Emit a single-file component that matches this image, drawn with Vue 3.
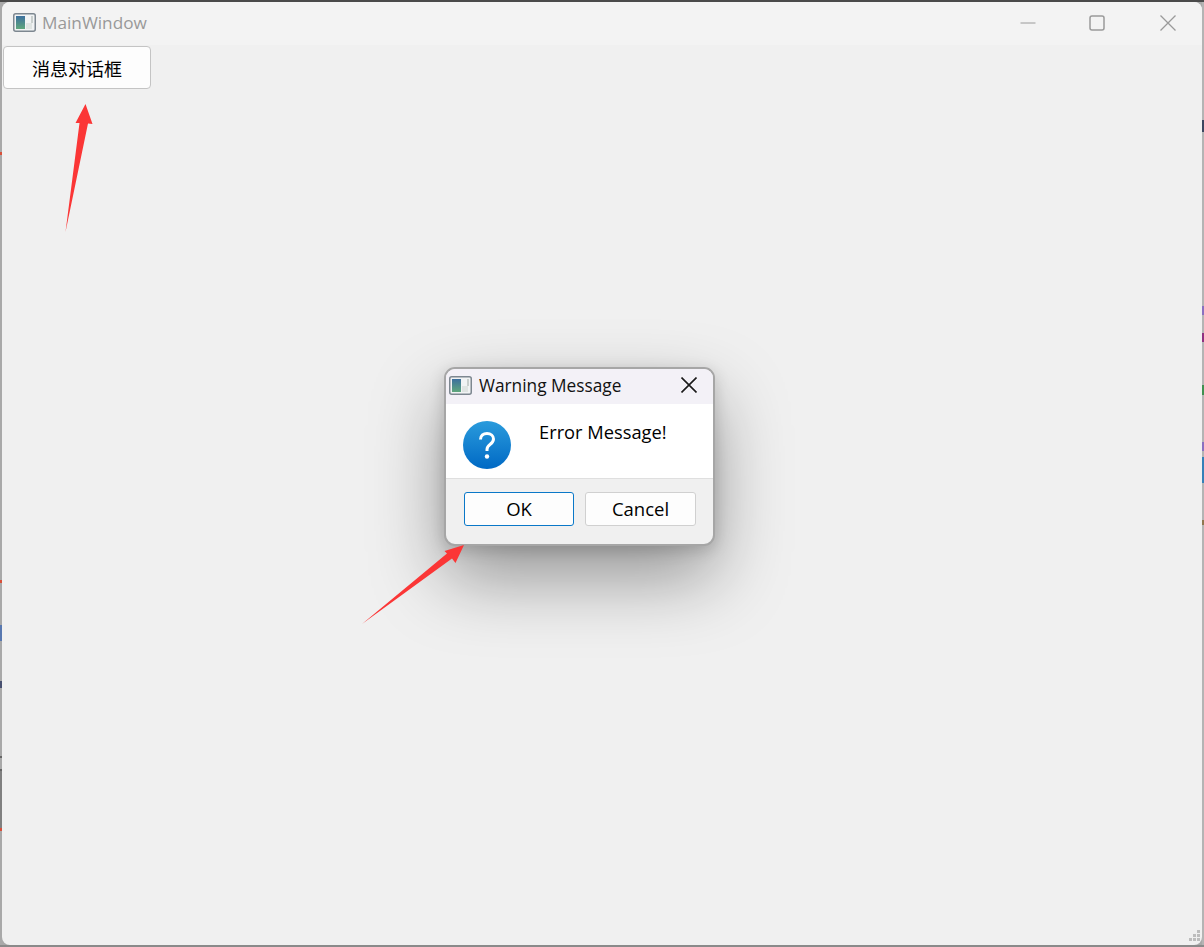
<template>
  <div class="window">
    <header class="titlebar">
      <svg class="app-icon" width="23" height="19" viewBox="0 0 23 19">
        <defs>
          <linearGradient id="pane" x1="0" y1="0" x2="0" y2="1">
            <stop offset="0" stop-color="#3c6f9e" />
            <stop offset="1" stop-color="#5fa77c" />
          </linearGradient>
        </defs>
        <rect x="0.75" y="0.75" width="21.5" height="17.5" rx="2" fill="#f1f3f4" stroke="#7d8790" stroke-width="1.5" />
        <rect x="3" y="3" width="9" height="13" fill="url(#pane)" />
        <rect x="13" y="10" width="6" height="6" fill="#dfe4e2" />
        <rect x="18" y="3" width="2" height="7" fill="#c9cfcd" />
      </svg>
      <span class="title">MainWindow</span>
      <div class="controls">
        <svg width="16" height="16" viewBox="0 0 16 16"><path d="M0.5 8H15.5" stroke="#9a9a9a" stroke-width="1" fill="none" /></svg>
        <svg width="16" height="16" viewBox="0 0 16 16"><rect x="1" y="1" width="14" height="14" rx="2" stroke="#9a9a9a" stroke-width="1.5" fill="none" /></svg>
        <svg class="close" width="16" height="16" viewBox="0 0 16 16"><path d="M0.5 0.5L15.5 15.5M15.5 0.5L0.5 15.5" stroke="#9a9a9a" stroke-width="1.3" fill="none" /></svg>
      </div>
    </header>

    <main class="content">
      <button class="push-button">消息对话框</button>
    </main>

    <div class="grip">
      <i v-for="n in grip" :key="n" :class="'g' + n"></i>
    </div>

    <section class="dialog">
      <div class="dialog-title">
        <svg class="dialog-icon" width="23" height="19" viewBox="0 0 23 19">
          <rect x="0.75" y="0.75" width="21.5" height="17.5" rx="2" fill="#f1f3f4" stroke="#7d8790" stroke-width="1.5" />
          <rect x="3" y="3" width="9" height="13" fill="url(#pane)" />
          <rect x="13" y="10" width="6" height="6" fill="#dfe4e2" />
          <rect x="18" y="3" width="2" height="7" fill="#c9cfcd" />
        </svg>
        <span>Warning Message</span>
        <svg class="dialog-close" width="16" height="16" viewBox="0 0 16 16"><path d="M0.5 0.5L15.5 15.5M15.5 0.5L0.5 15.5" stroke="#1a1a1a" stroke-width="1.6" fill="none" /></svg>
      </div>
      <div class="dialog-body">
        <svg class="question" width="48" height="48" viewBox="0 0 48 48">
          <defs>
            <linearGradient id="ball" x1="0" y1="0" x2="0" y2="1">
              <stop offset="0" stop-color="#2a9bdc" />
              <stop offset="1" stop-color="#0069c4" />
            </linearGradient>
          </defs>
          <circle cx="24" cy="24" r="24" fill="url(#ball)" />
          <path d="M17.5 18.5C17.5 14.5 20.5 12.5 24 12.5C27.8 12.5 30.5 14.8 30.5 18C30.5 20.6 29 22 27 23.5C25 25 24 26 24 28.5V30" stroke="#fff" stroke-width="3" fill="none" />
          <circle cx="24" cy="35.5" r="2.2" fill="#fff" />
        </svg>
        <p class="message">Error Message!</p>
      </div>
      <div class="dialog-footer">
        <button class="dlg-button default">OK</button>
        <button class="dlg-button">Cancel</button>
      </div>
    </section>

    <svg class="arrows" width="1204" height="947" viewBox="0 0 1204 947">
      <polygon points="85.5,104 92.5,124 88,123.5 65.5,232 79.5,123 75.5,123" fill="#fb3636" />
      <polygon points="464,545 455.5,563 452,558.5 362,624 447,553.5 444.5,551" fill="#fb3636" />
    </svg>
  </div>
</template>

<script setup>
const grip = [1, 2, 3, 4, 5, 6];
</script>

<style scoped>
.window {
  position: relative;
  box-sizing: border-box;
  width: 1200px;
  height: 943px;
  margin: 2px 2px 0;
  background: #f0f0f0;
  border-radius: 8px;
  overflow: hidden;
  font-family: "Open Sans", "Noto Sans", "Noto Sans CJK SC", sans-serif;
}

.titlebar {
  display: flex;
  align-items: center;
  box-sizing: border-box;
  height: 43px;
  padding: 0 0 2px 11px;
  background: #f3f3f3;
}
.app-icon {
  margin-right: 6px;
}
.title {
  font-size: 17.2px;
  color: #999;
}
.controls {
  display: flex;
  align-items: center;
  gap: 53px;
  margin-left: auto;
  margin-right: 26px;
}
.controls .close {
  margin-left: 2px;
}

.content {
  padding: 1px 0 0 1px;
}
.push-button {
  display: block;
  width: 148px;
  height: 43px;
  padding: 0;
  background: #fdfdfd;
  border: 1px solid #c4c4c4;
  border-radius: 4px;
  font-family: "Noto Sans CJK SC", sans-serif;
  font-size: 18px;
  color: #000;
}

.grip {
  position: absolute;
  right: 1px;
  bottom: 2px;
  width: 13px;
  height: 13px;
}
.grip i {
  position: absolute;
  width: 3px;
  height: 3px;
  background: #bdbdbd;
}
.g1 { left: 9px; top: 0; }
.g2 { left: 5px; top: 4px; }
.g3 { left: 9px; top: 4px; }
.g4 { left: 1px; top: 8px; }
.g5 { left: 5px; top: 8px; }
.g6 { left: 9px; top: 8px; }

.dialog {
  position: absolute;
  left: 442px;
  top: 365px;
  box-sizing: border-box;
  width: 271px;
  height: 179px;
  display: flex;
  flex-direction: column;
  background: #f0f0f0;
  border: 2px solid #a6a6a6;
  border-radius: 11px;
  overflow: hidden;
  box-shadow: 0 32px 72px rgba(0, 0, 0, 0.38), 0 4px 16px rgba(0, 0, 0, 0.16);
}
.dialog-title {
  display: flex;
  align-items: center;
  box-sizing: border-box;
  height: 35px;
  padding: 0 0 3px 3px;
  background: #f3f1f7;
  font-size: 17.3px;
  color: #111;
}
.dialog-icon {
  margin-right: 7px;
}
.dialog-close {
  margin-left: auto;
  margin-right: 16px;
}
.dialog-body {
  display: flex;
  height: 75px;
  background: #fff;
  border-bottom: 1px solid #dfdfdf;
  box-sizing: border-box;
  padding: 17px 0 0 17px;
}
.question {
  flex: none;
}
.message {
  margin: -2px 0 0 28px;
  font-size: 18.3px;
  line-height: 26px;
  color: #000;
}
.dialog-footer {
  display: flex;
  gap: 11px;
  padding: 13px 0 0 18px;
}
.dlg-button {
  width: 111px;
  height: 34px;
  padding: 0 0 2px;
  background: #fdfdfd;
  border: 1px solid #d0d0d0;
  border-radius: 3px;
  font-family: inherit;
  font-size: 18.5px;
  color: #000;
}
.dlg-button.default {
  width: 110px;
  border-color: #0a78c8;
}

.arrows {
  position: absolute;
  left: -2px;
  top: -2px;
  pointer-events: none;
}
</style>

<style>
html,
body {
  height: 947px;
  margin: 0;
  overflow: hidden;
  background: #a9a9a9;
}
/* what shows of the desktop behind the window, along its edges */
body {
  background:
    linear-gradient(#4a4a4a, #4a4a4a) top / 100% 2px no-repeat,
    linear-gradient(#8a8a8a, #8a8a8a) bottom / 100% 2px no-repeat,
    linear-gradient(
      #a9a9a9 152px, #d8503a 152px, #d8503a 155px, #a9a9a9 155px,
      #a9a9a9 580px, #d8503a 580px, #d8503a 583px, #a9a9a9 583px,
      #a9a9a9 625px, #5878b0 625px, #5878b0 641px, #a9a9a9 641px,
      #a9a9a9 681px, #485070 681px, #485070 688px, #a9a9a9 688px,
      #a9a9a9 756px, #666 756px, #666 758px, #a9a9a9 758px,
      #a9a9a9 769px, #666 769px, #666 771px, #808080 771px,
      #808080 828px, #d8503a 828px, #d8503a 831px, #a9a9a9 831px
    ) left / 2px 100% no-repeat,
    linear-gradient(
      #b4b4b4 120px, #3c4660 120px, #3c4660 132px, #b4b4b4 132px,
      #b4b4b4 306px, #8a70c0 306px, #8a70c0 315px, #b4b4b4 315px,
      #b4b4b4 333px, #903080 333px, #903080 342px, #b4b4b4 342px,
      #b4b4b4 385px, #409050 385px, #409050 395px, #b4b4b4 395px,
      #b4b4b4 442px, #8a70c0 442px, #8a70c0 451px, #b4b4b4 451px,
      #b4b4b4 457px, #3580b8 457px, #3580b8 483px, #b4b4b4 483px,
      #b4b4b4 520px, #907850 520px, #907850 525px, #b4b4b4 525px
    ) right / 2px 100% no-repeat,
    #a9a9a9;
}
</style>
